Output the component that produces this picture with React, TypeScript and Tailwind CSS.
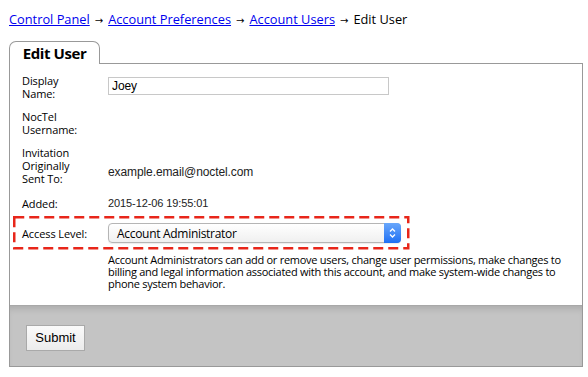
import React from "react";

const ui = "font-['Open_Sans','Noto_Sans',sans-serif]";
const sys = "font-['Liberation_Sans',Arial,sans-serif]";

function Arrow() {
  return <span className="font-['DejaVu_Sans',sans-serif] text-[10px] leading-none tracking-[0px] mx-[5px]">→</span>;
}

export default function App() {
  return (
    <div className={`w-[588px] h-[377px] bg-white text-black ${ui} relative`}>
      <div className="pt-[10px]">
        <div className="pl-[9px] h-[18px] text-[12.8px] leading-[18px] whitespace-nowrap">
          <a href="#" className="text-[#0000ee] underline">Control Panel</a>
          <Arrow />
          <a href="#" className="text-[#0000ee] underline">Account Preferences</a>
          <Arrow />
          <a href="#" className="text-[#0000ee] underline">Account Users</a>
          <Arrow />
          <span>Edit User</span>
        </div>
      </div>
      <div className="ml-[9px] mt-[13px] w-[574px]">
        <div className="w-[91px] h-[23px] border border-b-0 border-[#999] rounded-t-[7px] bg-white relative z-10 -mb-px flex items-center justify-center text-[15px] font-bold tracking-[-0.4px]">
          Edit User
        </div>
        <div className="border border-[#999] bg-white">
          <div className="pl-[12px] pt-[10px] pb-[15px] text-[11px] leading-[13px] tracking-[-0.1px]">
            <div className="flex">
              <div className="w-[86px] shrink-0">Display<br />Name:</div>
              <div className="pt-[3px]">
                <div className={`w-[281px] h-[18px] border border-[#c8c8c8] pl-[3px] text-[12px] leading-[16px] ${sys}`}>Joey</div>
              </div>
            </div>
            <div className="flex mt-[10px]">
              <div className="w-[86px] shrink-0">NocTel<br />Username:</div>
            </div>
            <div className="flex mt-[10px] items-center">
              <div className="w-[86px] shrink-0">Invitation<br />Originally<br />Sent To:</div>
              <div className={`text-[12px] pt-[13px] text-[#222] ${sys}`}>example.email@noctel.com</div>
            </div>
            <div className="flex mt-[12px]">
              <div className="w-[86px] shrink-0">Added:</div>
              <div className={`text-[11px] text-[#222] ${sys}`}>2015-12-06 19:55:01</div>
            </div>
            <div className="flex mt-[13px] items-center">
              <div className="w-[86px] shrink-0">Access Level:</div>
              <div className="w-[293px] h-[20px] rounded-[4px] border border-[#b5b5b5] bg-gradient-to-b from-white to-[#f0f0f0] flex items-center shadow-[0_1px_1px_rgba(0,0,0,0.08)]">
                <span className="pl-[8px] text-[12px] tracking-[-0.3px] flex-1">Account Administrator</span>
                <span className="w-[17px] h-[20px] -mr-px -my-px rounded-r-[4px] bg-gradient-to-b from-[#69a7fb] to-[#1c6ff3] flex items-center justify-center">
                  <svg width="9" height="12" viewBox="0 0 9 12">
                    <path d="M2 4.5 L4.5 2 L7 4.5 M2 7.5 L4.5 10 L7 7.5" fill="none" stroke="white" strokeWidth="1.3" />
                  </svg>
                </span>
              </div>
            </div>
            <div className="ml-[86px] mt-[11px] pr-[10px] text-[11px] leading-[12px] tracking-[-0.27px]">
              Account Administrators can add or remove users, change user permissions, make changes to billing and legal information associated with this account, and make system-wide changes to phone system behavior.
            </div>
          </div>
          <div className="h-[61px] bg-[#c4c4c4] border-t border-[#a8a8a8] shadow-[inset_0_6px_6px_-3px_rgba(0,0,0,0.12)] pl-[16px] pt-[18px]">
            <button className={`w-[59px] h-[26px] border border-[#a9a9a9] bg-gradient-to-b from-[#fafafa] to-[#ececec] text-[13px] ${sys}`}>Submit</button>
          </div>
        </div>
      </div>
      <svg className="absolute left-[13px] top-[216px]" width="397" height="34">
        <rect x="1.25" y="1.25" width="394" height="31" fill="none" stroke="#e8261a" strokeWidth="2.5" strokeDasharray="10 5" />
      </svg>
    </div>
  );
}
